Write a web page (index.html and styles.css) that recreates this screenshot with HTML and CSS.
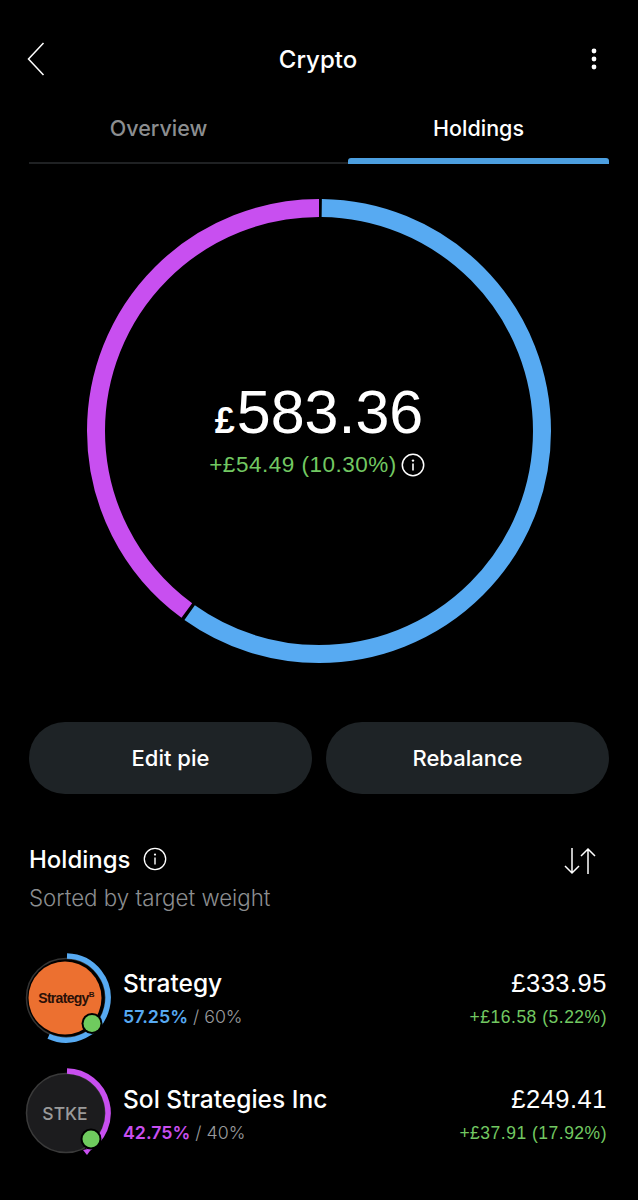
FILE: index.html
```html
<!DOCTYPE html>
<html lang="en">
<head>
    <meta charset="UTF-8">
    <meta name="viewport" content="width=device-width, initial-scale=1.0">
    <title>Crypto</title>
    <link rel="stylesheet" href="styles.css">
</head>
<body>
    <div class="page">
        <div class="topbar">
            <svg class="back" width="18" height="34" viewBox="0 0 18 34"><path d="M16.5 1 L1.5 17 L16.5 33" fill="none" stroke="#fff" stroke-width="1.5"/></svg>
            <div class="title">Crypto</div>
            <svg class="more" width="6" height="22" viewBox="0 0 6 22"><circle cx="3" cy="3" r="2.4" fill="#fff"/><circle cx="3" cy="11" r="2.4" fill="#fff"/><circle cx="3" cy="19" r="2.4" fill="#fff"/></svg>
        </div>

        <div class="tabs">
            <div class="tab">Overview</div>
            <div class="tab active">Holdings</div>
        </div>

        <div class="pie">
            <svg width="464" height="464" viewBox="0 0 464 464">
                <circle cx="232" cy="232" r="223" fill="none" stroke="#57aaf2" stroke-width="18" pathLength="100" stroke-dasharray="59.65 40.35" stroke-dashoffset="-0.2" transform="rotate(-90 232 232)"/>
                <circle cx="232" cy="232" r="223" fill="none" stroke="#c84ff0" stroke-width="18" pathLength="100" stroke-dasharray="39.9 60.1" stroke-dashoffset="-60.1" transform="rotate(-90 232 232)"/>
            </svg>
            <div class="pie-center">
                <div class="total"><span class="pound">£</span>583.36</div>
                <div class="gain">+£54.49 (10.30%)
                    <svg width="24" height="24" viewBox="0 0 24 24"><circle cx="12" cy="12" r="10.7" fill="none" stroke="#fff" stroke-width="1.5"/><circle cx="12" cy="7.6" r="1.2" fill="#fff"/><path d="M12 10.6v7" stroke="#fff" stroke-width="1.6"/></svg>
                </div>
            </div>
        </div>

        <div class="actions">
            <div class="btn">Edit pie</div>
            <div class="btn">Rebalance</div>
        </div>

        <div class="section-head">
            <div>
                <div class="section-title">Holdings
                    <svg width="24" height="24" viewBox="0 0 24 24"><circle cx="12" cy="12" r="10.7" fill="none" stroke="#fff" stroke-width="1.3"/><circle cx="12" cy="7.6" r="1.1" fill="#fff"/><path d="M12 10.6v7" stroke="#fff" stroke-width="1.4"/></svg>
                </div>
                <div class="section-sub">Sorted by target weight</div>
            </div>
            <svg class="sort" width="32" height="28" viewBox="0 0 32 28"><path d="M8 1v25M1 19l7 7 7-7M24 27V2M17 9l7-7 7 7" fill="none" stroke="#fff" stroke-width="1.5"/></svg>
        </div>

        <div class="row">
            <div class="avatar">
                <svg width="88" height="92" viewBox="0 0 88 92">
                    <circle cx="42" cy="46" r="39.5" fill="none" stroke="#333" stroke-width="1.5"/>
                    <circle cx="41" cy="46" r="36.5" fill="#ec7030"/>
                    <path d="M43 4 A42 42 0 1 1 24.6 84.2" fill="none" stroke="#57aaf2" stroke-width="5.5"/>
                    <circle cx="68" cy="71.500" r="10.500" fill="#000"/>
                    <circle cx="68" cy="71.500" r="8.500" fill="#6fcb5e"/>
                </svg>
                <span class="logo-text">Strategy<sup>B</sup></span>
            </div>
            <div class="info">
                <div class="name">Strategy</div>
                <div class="weight"><span class="blue">57.25%</span> / 60%</div>
            </div>
            <div class="values">
                <div class="value">£333.95</div>
                <div class="change">+£16.58 (5.22%)</div>
            </div>
        </div>

        <div class="row">
            <div class="avatar">
                <svg width="88" height="92" viewBox="0 0 88 92">
                    <circle cx="42" cy="45" r="39.500" fill="#1c1c1e" stroke="#3a3a3a" stroke-width="1.500"/>
                    <path d="M43 3 A42 42 0 0 1 63 81.400" fill="none" stroke="#c84ff0" stroke-width="5.500"/>
                    <path d="M59 82 L68 80 L63 87 Z" fill="#c84ff0"/>
                    <circle cx="67" cy="71" r="10.500" fill="#000"/>
                    <circle cx="67" cy="71" r="8.500" fill="#6fcb5e"/>
                </svg>
                <span class="logo-text stke">STKE</span>
            </div>
            <div class="info">
                <div class="name">Sol Strategies Inc</div>
                <div class="weight"><span class="purple">42.75%</span> / 40%</div>
            </div>
            <div class="values">
                <div class="value">£249.41</div>
                <div class="change">+£37.91 (17.92%)</div>
            </div>
        </div>
    </div>
</body>
</html>
```

FILE: styles.css
```css
body {
    margin: 0;
    background-color: #000;
    color: #fff;
    font-family: Inter, "Liberation Sans", sans-serif;
}
.page {
    height: 1200px;
    padding: 42px 29px 0;
    box-sizing: border-box;
    overflow: hidden;
}
.topbar {
    display: flex;
    justify-content: space-between;
    align-items: center;
    height: 34px;
}
.back {
    margin-left: -2px;
}
.more {
    margin-right: 12px;
}
.title {
    font-size: 24px;
    font-weight: 500;
}
.tabs {
    display: flex;
    margin-top: 28px;
    border-bottom: 2px solid #1f2123;
    height: 58px;
}
.tab {
    flex: 1;
    text-align: center;
    font-size: 21.5px;
    font-weight: 500;
    color: #8c8e90;
    padding-top: 11px;
    box-sizing: border-box;
}
.tab:first-child {
    flex: 0 0 319px;
    padding-right: 60px;
}
.tab.active {
    color: #fff;
    position: relative;
}
.tab.active::after {
    content: "";
    position: absolute;
    left: 0;
    right: 0;
    bottom: -2px;
    height: 6px;
    background-color: #4c9fe0;
    border-radius: 3px 3px 0 0;
}
.pie {
    display: grid;
    justify-content: center;
    align-items: center;
    margin-top: 35px;
    height: 464px;
}
.pie > * {
    grid-area: 1 / 1;
}
.pie-center {
    text-align: center;
    margin-bottom: 3px;
}
.total {
    font-family: "Liberation Sans", sans-serif;
    font-size: 61px;
    line-height: 62px;
}
.pound {
    font-size: 36px;
    font-weight: 700;
    margin-right: 2px;
}
.gain {
    display: flex;
    justify-content: center;
    align-items: center;
    gap: 4px;
    font-family: "Liberation Sans", sans-serif;
    font-size: 22.5px;
    letter-spacing: 0.5px;
    color: #72c862;
    margin-right: 4px;
}
.actions {
    display: flex;
    gap: 14px;
    margin-top: 59px;
}
.btn {
    flex: 1;
    height: 72px;
    line-height: 72px;
    text-align: center;
    border-radius: 36px;
    background-color: #1e2326;
    font-size: 22px;
    font-weight: 500;
}
.section-head {
    display: flex;
    justify-content: space-between;
    margin-top: 51px;
}
.section-title {
    display: flex;
    align-items: center;
    gap: 12px;
    font-size: 24px;
    font-weight: 500;
    height: 28px;
}
.section-sub {
    font-size: 22.3px;
    font-weight: 300;
    color: #8c8e90;
    margin-top: 11px;
}
.sort {
    margin-right: 13px;
    margin-top: 2px;
}
.row {
    display: flex;
    align-items: center;
    height: 92px;
    margin-top: 24px;
}
.section-head + .row {
    margin-top: 41px;
}
.avatar {
    position: relative;
    flex: 0 0 99px;
    height: 92px;
    margin-left: -5px;
}
.logo-text {
    position: absolute;
    left: 0;
    width: 84px;
    top: 38px;
    text-align: center;
    font-family: "Liberation Sans", sans-serif;
    font-size: 14px;
    font-weight: 700;
    letter-spacing: -0.7px;
    color: #2a1008;
}
.logo-text sup {
    font-size: 8px;
    line-height: 0;
}
.logo-text.stke {
    top: 35px;
    width: 82px;
    font-family: Inter, sans-serif;
    font-size: 17.5px;
    font-weight: 500;
    letter-spacing: 0;
    color: #9a9a9a;
}
.info {
    flex: 1;
    margin-bottom: 2px;
}
.name {
    font-size: 24.5px;
    font-weight: 500;
}
.weight {
    font-size: 17.8px;
    font-weight: 300;
    color: #9a9c9e;
    margin-top: 8px;
}
.blue {
    color: #57aaf2;
    font-weight: 600;
}
.purple {
    color: #c84ff0;
    font-weight: 600;
}
.values {
    text-align: right;
    font-family: "Liberation Sans", sans-serif;
    margin-right: 2px;
}
.value {
    font-size: 25.5px;
    letter-spacing: 0.5px;
}
.change {
    font-size: 17.5px;
    letter-spacing: 0.5px;
    color: #72c862;
    margin-top: 9px;
}
```
